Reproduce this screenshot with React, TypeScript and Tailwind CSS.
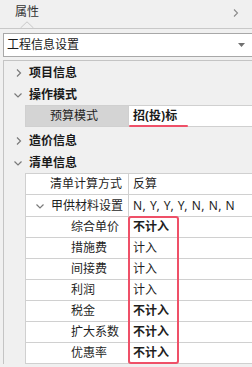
import React from 'react';

const font = { fontFamily: '"Noto Sans", "Noto Sans CJK SC", sans-serif' };

const Chevron = ({ open }: { open?: boolean }) => (
  <svg width="10" height="10" viewBox="0 0 10 10" className="shrink-0">
    {open ? (
      <path d="M1.5 3.5 L5 7 L8.5 3.5" fill="none" stroke="#7a7a7a" strokeWidth="1.2" />
    ) : (
      <path d="M4 1.5 L7.5 5 L4 8.5" fill="none" stroke="#7a7a7a" strokeWidth="1.2" />
    )}
  </svg>
);

const Section = ({ title, open, h }: { title: string; open?: boolean; h: string }) => (
  <div className={`flex items-center pl-[9px] ${h}`}>
    <Chevron open={open} />
    <span className="ml-[6px] text-[12px] leading-none font-bold text-[#1a1a1a]">{title}</span>
  </div>
);

const Row = ({
  label,
  value,
  bold,
  indent,
  h = 'h-[21px]',
  chevron,
}: {
  label: string;
  value: string;
  bold?: boolean;
  indent: string;
  h?: string;
  chevron?: boolean;
}) => (
  <div className={`flex border-b border-[#d0d0d0] bg-white ${h}`}>
    <div className={`w-[103px] shrink-0 border-r border-[#d0d0d0] flex items-center ${indent}`}>
      {chevron && (
        <span className="mr-[6px]">
          <Chevron open />
        </span>
      )}
      <span className="text-[12px] leading-none text-[#1f1f1f] whitespace-nowrap">{label}</span>
    </div>
    <div className="flex-1 flex items-center pl-[4px]">
      <span className={`text-[12px] leading-none text-[#1f1f1f] whitespace-nowrap ${bold ? 'font-bold' : ''}`}>{value}</span>
    </div>
  </div>
);

export default function App() {
  return (
    <div className="w-[252px] h-[367px] bg-[#f0f0f0] overflow-hidden" style={font}>
      {/* Header */}
      <div className="relative h-[29px] border-b border-[#c8c8c8] flex items-start justify-between pl-[15px] pr-[12px]">
        <span className="text-[12px] leading-[24px] text-[#333]">属性</span>
        <svg width="8" height="10" viewBox="0 0 8 10" className="mt-[8px]">
          <path d="M2 1.5 L5.5 5 L2 8.5" fill="none" stroke="#8a8a8a" strokeWidth="1.1" />
        </svg>
        <svg width="14" height="7" viewBox="0 0 14 7" className="absolute left-[20px] top-[21px]">
          <path d="M0.5 7 L7 0.8 L13.5 7" fill="#f0f0f0" stroke="#c8c8c8" strokeWidth="1" />
        </svg>
      </div>

      {/* Dropdown */}
      <div className="mt-[4px] ml-[3px] -mr-[4px] h-[24px] border border-[#a8a8a8] bg-white flex items-center justify-between pl-[3px] pr-[8px]">
        <span className="text-[12px] leading-none text-[#1a1a1a]">工程信息设置</span>
        <svg width="7" height="4" viewBox="0 0 7 4" className="mr-[2px]">
          <path d="M0 0 L7 0 L3.5 4 Z" fill="#707070" />
        </svg>
      </div>

      {/* Property grid */}
      <div className="mt-[3px] ml-[3px] border-t border-l border-[#c4c4c4]">
        <Section title="项目信息" h="h-[23px]" />
        <Section title="操作模式" open h="h-[21px]" />
        <div className="ml-[21px] flex h-[22px] border-t border-b border-l border-[#d0d0d0]">
          <div className="w-[103px] shrink-0 bg-[#d4d4d4] border-r border-[#d0d0d0] flex items-center pl-[24px]">
            <span className="text-[12px] leading-none text-[#1f1f1f]">预算模式</span>
          </div>
          <div className="relative flex-1 bg-white flex items-center pl-[4px]">
            <span className="text-[12px] leading-none font-bold text-[#1a1a1a]">招(投)标</span>
            <div className="absolute left-0 bottom-[-1px] w-[59px] h-[2px] rounded-full bg-[#ef5068]" />
          </div>
        </div>
        <div className="mt-[3px]">
          <Section title="造价信息" h="h-[22px]" />
        </div>
        <Section title="清单信息" open h="h-[21px]" />
        <div className="ml-[21px] border-t border-l border-[#d0d0d0]">
          <Row label="清单计算方式" value="反算" indent="pl-[24px]" />
          <div className="flex border-b border-[#d0d0d0] bg-white h-[22px]">
            <div className="w-[103px] shrink-0 border-r border-[#d0d0d0] flex items-center pl-[9px]">
              <Chevron open />
              <span className="ml-[6px] text-[12px] leading-none text-[#1f1f1f] whitespace-nowrap">甲供材料设置</span>
            </div>
            <div className="flex-1 flex items-center pl-[4px]">
              <span className="text-[12px] leading-none text-[#1f1f1f] whitespace-nowrap tracking-[0.5px]">N, Y, Y, Y, N, N, N</span>
            </div>
          </div>
          <div className="relative">
            <Row label="综合单价" value="不计入" bold indent="pl-[45px]" />
            <Row label="措施费" value="计入" indent="pl-[45px]" />
            <Row label="间接费" value="计入" indent="pl-[45px]" />
            <Row label="利润" value="计入" indent="pl-[45px]" />
            <Row label="税金" value="不计入" bold indent="pl-[45px]" />
            <Row label="扩大系数" value="不计入" bold indent="pl-[45px]" />
            <Row label="优惠率" value="不计入" bold indent="pl-[45px]" />
            <div className="pointer-events-none absolute left-[102px] top-[-1px] bottom-0 w-[51px] border-2 border-[#ef5068] rounded-[3px]" />
          </div>
        </div>
      </div>
    </div>
  );
}
